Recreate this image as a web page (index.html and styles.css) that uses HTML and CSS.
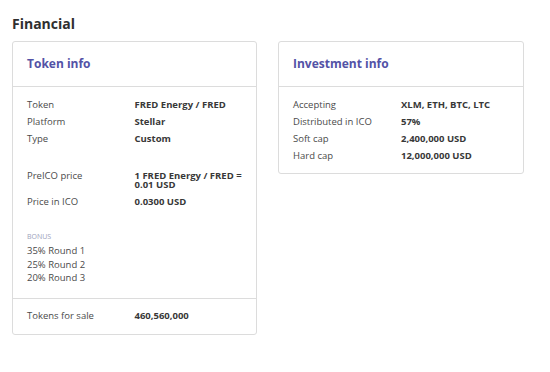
FILE: index.html
```html
<!DOCTYPE html>
<html>
<head>
<meta charset="utf-8">
<link rel="stylesheet" href="styles.css">
</head>
<body>
<main class="page">
  <h2 class="page-title">Financial</h2>
  <div class="cards">
    <section class="card">
      <header class="card-head"><h3 class="card-title">Token info</h3></header>
      <div class="card-body">
        <div class="group">
          <div class="row"><span class="label">Token</span><span class="value">FRED Energy / FRED</span></div>
          <div class="row"><span class="label">Platform</span><span class="value">Stellar</span></div>
          <div class="row"><span class="label">Type</span><span class="value">Custom</span></div>
        </div>
        <div class="group">
          <div class="row"><span class="label">PreICO price</span><span class="value">1 FRED Energy / FRED = 0.01 USD</span></div>
          <div class="row"><span class="label">Price in ICO</span><span class="value">0.0300 USD</span></div>
        </div>
        <div class="bonus">
          <div class="bonus-label">BONUS</div>
          <div class="bonus-line">35% Round 1</div>
          <div class="bonus-line">25% Round 2</div>
          <div class="bonus-line">20% Round 3</div>
        </div>
      </div>
      <div class="card-foot">
        <div class="row"><span class="label">Tokens for sale</span><span class="value">460,560,000</span></div>
      </div>
    </section>
    <section class="card">
      <header class="card-head"><h3 class="card-title">Investment info</h3></header>
      <div class="card-body">
        <div class="group">
          <div class="row"><span class="label">Accepting</span><span class="value">XLM, ETH, BTC, LTC</span></div>
          <div class="row"><span class="label">Distributed in ICO</span><span class="value">57%</span></div>
          <div class="row"><span class="label">Soft cap</span><span class="value">2,400,000 USD</span></div>
          <div class="row"><span class="label">Hard cap</span><span class="value">12,000,000 USD</span></div>
        </div>
      </div>
    </section>
  </div>
</main>
</body>
</html>
```

FILE: styles.css
```css
html, body {
  margin: 0;
  padding: 0;
  background: #ffffff;
}
body {
  font-family: "Open Sans", "Liberation Sans", sans-serif;
  color: #444;
}
.page {
  padding: 14px 26px 0 12px;
}
.page-title {
  margin: 0 0 8px;
  font-size: 14px;
  line-height: 19px;
  font-weight: 700;
  color: #2f2f2f;
}
.cards {
  display: grid;
  grid-template-columns: 245px 246px;
  column-gap: 21px;
  align-items: start;
}
.card {
  border: 1px solid #dcdcdc;
  border-radius: 3px;
  background: #fff;
}
.card-head {
  padding: 14px 14px;
  border-bottom: 1px solid #dcdcdc;
}
.card-title {
  margin: 0;
  font-size: 12px;
  line-height: 16px;
  font-weight: 700;
  color: #5352a6;
}
.card-body {
  padding: 9px 14px 9px;
  display: flex;
  flex-direction: column;
  gap: 20px;
}
.group {
  display: flex;
  flex-direction: column;
}
.row {
  display: grid;
  grid-template-columns: 1fr 1fr;
  padding: 3.75px 0;
  font-size: 9.5px;
  line-height: 9.5px;
}
.label {
  color: #4a4a4a;
}
.value {
  font-weight: 700;
  color: #383838;
}
.bonus {
  margin-top: 1.5px;
  margin-bottom: 4px;
}
.bonus-label {
  font-size: 7px;
  line-height: 10px;
  color: #9da1bb;
  margin-bottom: 2px;
}
.bonus-line {
  font-size: 9.5px;
  line-height: 13.5px;
  color: #4a4a4a;
}
.card-foot {
  border-top: 1px solid #dcdcdc;
  padding: 9px 14px;
}
```
